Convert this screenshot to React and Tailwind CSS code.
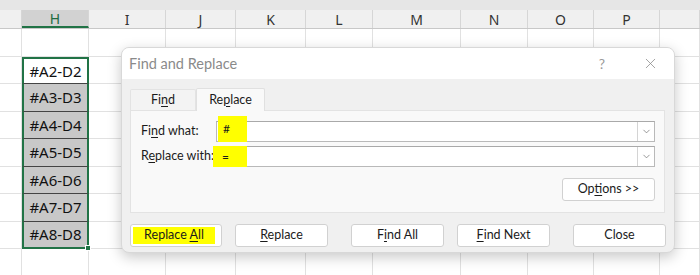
import { ChevronDown, X } from 'lucide-react';

const COLS = [
  { name: '', w: 22 },
  { name: 'H', w: 67, sel: true },
  { name: 'I', w: 77 },
  { name: 'J', w: 70 },
  { name: 'K', w: 70 },
  { name: 'L', w: 67 },
  { name: 'M', w: 88 },
  { name: 'N', w: 67 },
  { name: 'O', w: 66 },
  { name: 'P', w: 66 },
  { name: '', w: 40 },
];

const ROWS = [
  { h: 28, v: '' },
  { h: 27, v: '#A2-D2', first: true },
  { h: 28, v: '#A3-D3' },
  { h: 27, v: '#A4-D4' },
  { h: 28, v: '#A5-D5' },
  { h: 27, v: '#A6-D6' },
  { h: 28, v: '#A7-D7' },
  { h: 27, v: '#A8-D8', last: true },
  { h: 27, v: '' },
];

function U({ children }) {
  return <span className="underline underline-offset-2">{children}</span>;
}

function Btn({ children, className = '' }) {
  return (
    <div className={`w-[93px] h-[23px] flex items-center justify-center rounded-[3px] bg-white border border-[#d1d1d1] ${className}`}>
      <span className="whitespace-pre">{children}</span>
    </div>
  );
}

function Field({ children }) {
  return (
    <div className="relative flex-1 h-[21px] flex bg-white border border-[#b9b9b9] border-t-[#a9a9a9]">
      <div className="flex-1" />
      <div className="w-[17px] border-l border-[#d4d4d4] flex items-center justify-center text-[#6b6b6b]">
        <ChevronDown size={11} strokeWidth={1.5} />
      </div>
      {children}
    </div>
  );
}

export default function App() {
  return (
    <div className="relative w-[700px] h-[275px] overflow-hidden bg-white" style={{ fontFamily: '"Noto Sans", "Open Sans", sans-serif' }}>
      <div className="h-[10px] bg-[#e6e6e6]" />
      {/* column headers */}
      <div className="flex h-[19px] bg-[#f0f0f0] border-b border-[#c8c8c8]">
        {COLS.map((c, i) => (
          <div
            key={i}
            className={`shrink-0 flex items-center justify-center text-[14px] border-r border-[#d6d6d6] ${c.sel ? 'bg-[#d2d2d2] text-[#1e6b3f] border-b-2 border-b-[#217346]' : 'text-[#333]'}`}
            style={{ width: c.w }}
          >
            {c.name}
          </div>
        ))}
      </div>
      {/* grid */}
      {ROWS.map((r, ri) => (
        <div key={ri} className="flex" style={{ height: r.h }}>
          {COLS.map((c, ci) => {
            if (c.sel && r.v) {
              return (
                <div
                  key={ci}
                  className={`relative shrink-0 flex items-center justify-center text-[15px] text-[#111] border-x-2 border-x-[#217346] ${r.first ? 'bg-white border-t-2 border-t-[#217346] border-b border-b-[#444]' : 'bg-[#c8c8c8] border-b border-b-[#444]'} ${r.last ? 'border-b-2 border-b-[#217346]' : ''}`}
                  style={{ width: c.w }}
                >
                  {r.v}
                  {r.last && <div className="absolute -right-[4px] -bottom-[4px] w-[6px] h-[6px] bg-[#217346] border border-white" />}
                </div>
              );
            }
            return <div key={ci} className="shrink-0 border-r border-b border-[#e1e1e1]" style={{ width: c.w }} />;
          })}
        </div>
      ))}

      {/* dialog */}
      <div
        className="absolute left-[121px] top-[47px] w-[554px] h-[206px] rounded-[8px] overflow-hidden bg-[#f0f0f0] border border-[#d8d8d8] shadow-[0_4px_14px_rgba(0,0,0,0.22)] flex flex-col text-[12.5px] text-[#1b1b1b]"
        style={{ fontFamily: 'Lato, "Noto Sans", sans-serif' }}
      >
        <div className="h-[31px] bg-white flex items-center pl-[7px] pr-[15px]">
          <span className="text-[14.5px] text-[#8a8a8a]">Find and Replace</span>
          <span className="ml-auto text-[14px] text-[#9a9a9a] mr-[37px]">?</span>
          <X size={17} strokeWidth={1.1} className="text-[#8a8a8a]" />
        </div>
        <div className="flex-1 flex flex-col px-[8px] pt-[8px]">
          <div className="flex items-end h-[23px]">
            <div className="w-[66px] h-[21px] flex items-center justify-center bg-[#f3f3f3] border border-b-0 border-[#e3e3e3] rounded-t-[2px]">
              <span>Fi<U>n</U>d</span>
            </div>
            <div className="w-[69px] h-[23px] flex items-center justify-center bg-[#f9f9f9] border border-b-0 border-[#e0e0e0] rounded-t-[2px] -mb-px relative z-10">
              <span>Re<U>p</U>lace</span>
            </div>
          </div>
          <div className="w-[535px] h-[103px] bg-[#f9f9f9] border border-[#e3e3e3] pl-[10px] pr-[9px] pt-[10px] flex flex-col">
            <div className="flex items-center">
              <span className="w-[75px] whitespace-nowrap">Fi<U>n</U>d what:</span>
              <Field>
                <div className="absolute left-[1px] -top-[6px] w-[29px] h-[26px] bg-[#ffff00] flex items-end pb-[4px] pl-[5px] text-[12px]">#</div>
              </Field>
            </div>
            <div className="flex items-center mt-[4px]">
              <span className="w-[75px] whitespace-nowrap">R<U>e</U>place with:</span>
              <Field>
                <div className="absolute -left-[4px] -top-[1px] w-[34px] h-[21px] bg-[#ffff00] flex items-center pl-[9px] text-[12px]">=</div>
              </Field>
            </div>
            <div className="flex justify-end mt-[11px]">
              <Btn>Op<U>t</U>ions &gt;&gt;</Btn>
            </div>
          </div>
          <div className="flex items-center mt-[11px]">
            <div className="w-[92px] h-[23px] rounded-[3px] bg-white border border-[#d1d1d1] p-[2px]">
              <div className="w-[82px] h-full bg-[#ffff00] flex items-center justify-center">
                <span className="whitespace-pre">Replace <U>A</U>ll</span>
              </div>
            </div>
            <Btn className="ml-[13px]"><U>R</U>eplace</Btn>
            <Btn className="ml-[23px]">F<U>i</U>nd All</Btn>
            <Btn className="ml-[13px] border-[#3c87d6]"><U>F</U>ind Next</Btn>
            <Btn className="ml-[23px]">Close</Btn>
          </div>
        </div>
      </div>
    </div>
  );
}
